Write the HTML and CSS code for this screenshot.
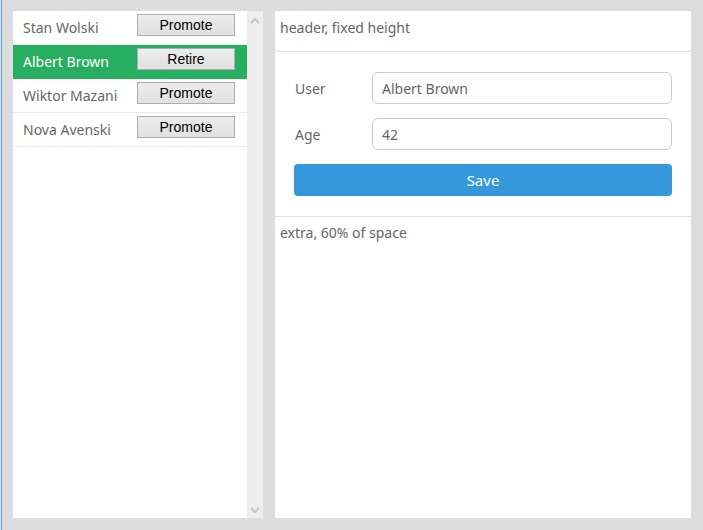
FILE: index.html
```html
<!DOCTYPE html>
<html>
<head>
<meta charset="utf-8">
<link rel="stylesheet" href="styles.css">
</head>
<body>
<div class="app">
  <div class="left">
    <div class="list">
      <div class="row"><span class="name">Stan Wolski</span><button class="btn">Promote</button></div>
      <div class="row selected"><span class="name">Albert Brown</span><button class="btn">Retire</button></div>
      <div class="row"><span class="name">Wiktor Mazani</span><button class="btn">Promote</button></div>
      <div class="row"><span class="name">Nova Avenski</span><button class="btn">Promote</button></div>
    </div>
    <div class="scrollbar">
      <svg class="arrow" width="10" height="6" viewBox="0 0 10 6"><path d="M1 5 L5 1 L9 5" fill="none" stroke="#c4c4c4" stroke-width="2"/></svg>
      <svg class="arrow" width="10" height="6" viewBox="0 0 10 6"><path d="M1 1 L5 5 L9 1" fill="none" stroke="#c4c4c4" stroke-width="2"/></svg>
    </div>
  </div>
  <div class="right">
    <div class="header">header, fixed height</div>
    <div class="form">
      <div class="field"><label class="label">User</label><input class="input" value="Albert Brown"></div>
      <div class="field"><label class="label">Age</label><input class="input" value="42"></div>
      <button class="save">Save</button>
    </div>
    <div class="extra">extra, 60% of space</div>
  </div>
</div>
</body>
</html>
```
FILE: styles.css
```css
html { background: #dddddd; }
body {
  margin: 0 0 0 1px;
  border-left: 1px solid #5aa9e6;
  height: 530px;
  box-sizing: border-box;
  background: #dddddd;
  font-family: "Noto Sans", sans-serif;
  color: #666666;
}
.app {
  display: flex;
  height: 530px;
  box-sizing: border-box;
  padding: 11px 12px 12px 11px;
  gap: 12px;
}
.left {
  width: 250px;
  display: flex;
  background: #ffffff;
}
.list { flex: 1; }
.row {
  height: 33px;
  border-bottom: 1px solid #ebebeb;
  display: flex;
  align-items: center;
  padding-left: 10px;
  box-sizing: content-box;
}
.row .name {
  width: 114px;
  font-size: 14px;
}
.row.selected { background: #27ae60; border-bottom-color: #27ae60; }
.row.selected .name { color: #ffffff; }
.btn {
  align-self: flex-start;
  margin-top: 3px;
  width: 98px;
  height: 22px;
  background: linear-gradient(#ececec, #e1e1e1);
  border: 1px solid #adadad;
  font-family: "Liberation Sans", Arial, sans-serif;
  font-size: 14px;
  color: #000000;
  padding: 0;
}
.scrollbar {
  width: 16px;
  background: #eeeeee;
  display: flex;
  flex-direction: column;
  justify-content: space-between;
  align-items: center;
  padding: 7px 0 5px;
}
.right {
  flex: 1;
  background: #ffffff;
  display: flex;
  flex-direction: column;
}
.header {
  height: 40px;
  border-bottom: 1px solid #e0e0e0;
  padding-left: 5px;
  font-size: 14px;
  line-height: 33px;
}
.form {
  padding: 20px 19px 20px 19px;
  border-bottom: 1px solid #e0e0e0;
  display: flex;
  flex-direction: column;
  gap: 14px;
}
.field { display: flex; align-items: center; }
.label { width: 77px; padding-left: 1px; font-size: 14px; }
.input {
  flex: 1;
  height: 32px;
  box-sizing: border-box;
  border: 1px solid #cccccc;
  border-radius: 6px;
  padding: 0 9px;
  font-family: "Noto Sans", sans-serif;
  font-size: 14px;
  color: #666666;
  outline: none;
}
.save {
  height: 32px;
  background: #3498db;
  border: none;
  border-radius: 4px;
  color: #ffffff;
  font-family: "Noto Sans", sans-serif;
  font-size: 15px;
}
.extra {
  flex: 1;
  padding: 6px 5px;
  font-size: 14px;
}
```
